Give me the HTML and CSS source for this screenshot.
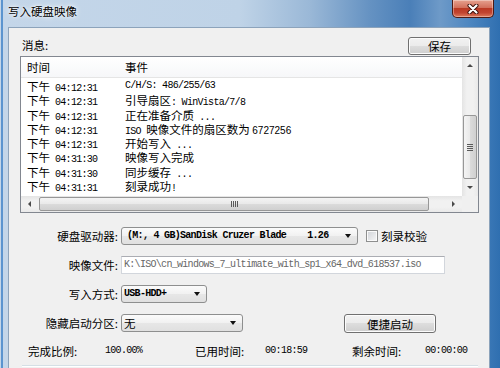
FILE: index.html
```html
<!DOCTYPE html>
<html lang="zh-CN">
<head>
    <meta charset="utf-8">
    <title>写入硬盘映像</title>
    <link rel="stylesheet" href="styles.css">
</head>
<body>
<div class="window">
    <div class="titlebar">
        <div class="title">写入硬盘映像</div>
        <div class="close-btn">
            <svg width="12" height="10" viewBox="0 0 12 10">
                <path d="M2.5 1.5 L9.5 8.5 M9.5 1.5 L2.5 8.5" stroke="#3a0d08" stroke-width="4" stroke-linecap="round"/>
                <path d="M2.5 1.5 L9.5 8.5 M9.5 1.5 L2.5 8.5" stroke="#fff" stroke-width="2.2" stroke-linecap="round"/>
            </svg>
        </div>
    </div>

    <div class="client">
        <div class="msg-bar">
            <span class="msg-label">消息:</span>
            <button class="btn save-btn">保存</button>
        </div>

        <div class="listbox">
            <div class="list-view">
                <div class="list-head"><span>时间</span><span>事件</span></div>
                <div class="list-body">
                    <div class="row"><span>下午<span class="mono time-num">04:12:31</span></span><span class="mono">C/H/S: 486/255/63</span></div>
                    <div class="row"><span>下午<span class="mono time-num">04:12:31</span></span><span>引导扇区<span class="mono">: WinVista/7/8</span></span></div>
                    <div class="row"><span>下午<span class="mono time-num">04:12:31</span></span><span>正在准备介质<span class="mono"> ...</span></span></div>
                    <div class="row"><span>下午<span class="mono time-num">04:12:31</span></span><span><span class="mono">ISO </span>映像文件的扇区数为 <span class="num">6727256</span></span></div>
                    <div class="row"><span>下午<span class="mono time-num">04:12:31</span></span><span>开始写入<span class="mono"> ...</span></span></div>
                    <div class="row"><span>下午<span class="mono time-num">04:31:30</span></span><span>映像写入完成</span></div>
                    <div class="row"><span>下午<span class="mono time-num">04:31:30</span></span><span>同步缓存<span class="mono"> ...</span></span></div>
                    <div class="row"><span>下午<span class="mono time-num">04:31:31</span></span><span>刻录成功<span class="mono">!</span></span></div>
                </div>
            </div>
            <div class="vscroll">
                <div class="sb-btn"><span class="arr up"></span></div>
                <div class="track"></div>
                <div class="vthumb"><span class="grip-v"></span></div>
                <div class="sb-btn"><span class="arr down"></span></div>
            </div>
            <div class="hscroll">
                <div class="sb-btn"><span class="arr left"></span></div>
                <div class="hthumb"><span class="grip-h"></span></div>
                <div class="track"></div>
                <div class="sb-btn"><span class="arr right"></span></div>
            </div>
            <div class="corner"></div>
        </div>

        <div class="form">
            <div class="form-label">硬盘驱动器:</div>
            <div class="field">
                <div class="combo drive-combo"><span class="mono bold drive-text">(M:, 4 GB)SanDisk Cruzer Blade    1.26</span><span class="arr down"></span></div>
                <div class="check"><span class="check-box"></span>刻录校验</div>
            </div>

            <div class="form-label">映像文件:</div>
            <div class="field">
                <div class="path-input mono">K:\ISO\cn_windows_7_ultimate_with_sp1_x64_dvd_618537.iso</div>
            </div>

            <div class="form-label">写入方式:</div>
            <div class="field">
                <div class="combo mode-combo"><span class="mono bold">USB-HDD+</span><span class="arr down"></span></div>
            </div>

            <div class="form-label">隐藏启动分区:</div>
            <div class="field">
                <div class="combo hide-combo"><span>无</span><span class="arr down"></span></div>
                <button class="btn quick-btn">便捷启动</button>
            </div>
        </div>

        <div class="status">
            <span>完成比例:</span>
            <span class="mono">100.00%</span>
            <span>已用时间:</span>
            <span class="mono">00:18:59</span>
            <span>剩余时间:</span>
            <span class="mono">00:00:00</span>
        </div>
        <div class="group-line"></div>
    </div>
</div>
</body>
</html>
```

FILE: styles.css
```css
html, body {
    margin: 0;
    height: 100%;
    overflow: hidden;
}
body {
    font-family: "Noto Sans CJK SC", sans-serif;
    font-size: 11.5px;
    color: #000;
}
.window {
    width: 500px;
    height: 368px;
    overflow: hidden;
    background:
        linear-gradient(90deg, transparent 1px, #5b94cf 1px, #5b94cf 3px, transparent 3px),
        linear-gradient(90deg, #c4d6e9 0%, #bfd3e7 48%, #9ab8d7 62%, #6592c2 74%, #4a7fb8 82%, #6e9ac8 88%, #4d86c0 94%, #2f6fb0 100%);
}

/* title bar */
.titlebar {
    display: flex;
    align-items: flex-start;
    height: 27px;
}
.title {
    padding: 4px 0 0 8px;
    line-height: 14px;
    text-shadow: 0 0 6px #fff, 0 0 3px #fff;
}
.close-btn {
    margin-left: auto;
    margin-right: 6px;
    width: 42px;
    height: 18px;
    box-sizing: border-box;
    border: 1px solid #4d1a14;
    border-top: none;
    border-radius: 0 0 5px 5px;
    background: linear-gradient(#e6a28f, #d2705c 45%, #bb3a24 50%, #c14430 75%, #dd7a5c);
    box-shadow: inset 0 0 0 1px rgba(255, 255, 255, 0.35);
    display: flex;
    align-items: center;
    justify-content: center;
}

/* client area */
.client {
    margin: 0 10px 0 8px;
    height: 341px;
    box-sizing: border-box;
    border: 1px solid #8ca3bb;
    border-bottom: none;
    background: #f0f0f0;
    padding: 9px 10px 0 11px;
}
.msg-bar {
    display: flex;
    justify-content: space-between;
    align-items: flex-start;
    height: 19px;
}
.msg-label {
    margin-left: 2px;
    line-height: 16px;
}
.btn {
    font: inherit;
    color: #000;
    padding: 0;
    box-sizing: border-box;
    border: 1px solid #707070;
    border-radius: 3px;
    background: linear-gradient(#f2f2f2, #ebebeb 50%, #dddddd 50%, #cfcfcf);
    box-shadow: inset 0 0 0 1px #fcfcfc;
    line-height: 16px;
}
.save-btn {
    width: 63px;
    height: 18px;
    margin-right: 8px;
}

/* list */
.listbox {
    height: 157px;
    box-sizing: border-box;
    border: 1px solid #828790;
    background: #fff;
    display: grid;
    grid-template-columns: 1fr 16px;
    grid-template-rows: 1fr 16px;
}
.list-view {
    overflow: hidden;
}
.list-head {
    height: 20px;
    border-bottom: 1px solid #e5e5e5;
    background: linear-gradient(#fff, #f6f7f9);
}
.list-head, .row {
    display: grid;
    grid-template-columns: 98px 1fr;
    padding-left: 6px;
}
.list-head span {
    line-height: 20px;
}
.list-body {
    padding-top: 1px;
}
.row {
    height: 14.3px;
    line-height: 14.3px;
    white-space: nowrap;
}
.mono {
    font-family: "Liberation Mono", "Courier New", monospace;
    font-size: 10px;
    letter-spacing: -0.7px;
}
.bold {
    font-weight: bold;
}
.time-num {
    margin-left: 5px;
}
.num {
    font-family: "Liberation Sans", Arial, sans-serif;
    font-size: 10px;
}

/* scrollbars */
.vscroll {
    display: flex;
    flex-direction: column;
    background: linear-gradient(90deg, #e4e4e4, #f1f1f1 30%, #f1f1f1 70%, #e9e9e9);
}
.hscroll {
    display: flex;
    background: linear-gradient(#e4e4e4, #f1f1f1 30%, #f1f1f1 70%, #e9e9e9);
}
.corner {
    background: #f0f0f0;
}
.sb-btn {
    flex: 0 0 17px;
    display: flex;
    align-items: center;
    justify-content: center;
}
.track {
    flex: 1;
}
.vthumb, .hthumb {
    box-sizing: border-box;
    border: 1px solid #979797;
    border-radius: 2px;
    display: flex;
    align-items: center;
    justify-content: center;
}
.vthumb {
    flex: 0 0 64px;
    margin: 0 1px;
    background: linear-gradient(90deg, #f4f4f4, #e9e9e9 50%, #dbdbdb 50%, #d0d0d0);
}
.hthumb {
    flex: 0 0 390px;
    margin: 1px 0 1px 1px;
    background: linear-gradient(#f4f4f4, #e9e9e9 50%, #dbdbdb 50%, #d0d0d0);
}
.grip-v {
    width: 6px;
    height: 7px;
    background: repeating-linear-gradient(#5a5a5a 0 1px, transparent 1px 2px);
}
.grip-h {
    width: 7px;
    height: 6px;
    background: repeating-linear-gradient(90deg, #5a5a5a 0 1px, transparent 1px 2px);
}
.arr {
    width: 0;
    height: 0;
    border: 3px solid transparent;
}
.arr.up {
    border-top-width: 0;
    border-bottom: 3px solid #4a4a4a;
}
.arr.down {
    border-bottom-width: 0;
    border-top: 3px solid #4a4a4a;
}
.arr.left {
    border-left-width: 0;
    border-right: 3px solid #4a4a4a;
}
.arr.right {
    border-right-width: 0;
    border-left: 3px solid #4a4a4a;
}

/* form */
.form {
    margin-top: 14px;
    display: grid;
    grid-template-columns: 98px 1fr;
    column-gap: 3px;
    row-gap: 11px;
    grid-auto-rows: 18px;
}
.form-label {
    text-align: right;
    line-height: 18px;
}
.field {
    display: flex;
    align-items: flex-start;
}
.combo {
    height: 18px;
    box-sizing: border-box;
    border: 1px solid #8e8f8f;
    border-radius: 3px;
    background: linear-gradient(#fbfbfb, #f1f1f1 50%, #e7e7e7 50%, #e0e0e0);
    display: flex;
    align-items: center;
    justify-content: space-between;
    padding: 0 6px 0 2px;
    line-height: 16px;
    white-space: pre;
}
.combo .arr.down {
    border-width: 4px 3.5px 0;
    border-top-color: #111;
}
.drive-combo {
    width: 237px;
}
.drive-text {
    margin-left: 3px;
}
.mode-combo {
    width: 86px;
}
.hide-combo {
    width: 122px;
}
.check {
    display: flex;
    align-items: center;
    height: 18px;
    margin-left: 8px;
}
.check-box {
    width: 12px;
    height: 12px;
    box-sizing: border-box;
    border: 1px solid #8e8f8f;
    background: linear-gradient(135deg, #cfd2d7, #f7f7f7);
    box-shadow: inset 0 0 0 1px #fafafa;
    margin-right: 3px;
}
.path-input {
    width: 324px;
    height: 18px;
    box-sizing: border-box;
    border: 1px solid #d2d6dc;
    border-top-color: #abadb3;
    background: #fff;
    color: #666;
    padding-left: 2px;
    line-height: 16px;
    white-space: nowrap;
    overflow: hidden;
}
.quick-btn {
    width: 92px;
    height: 19px;
    margin-left: 101px;
}

/* status */
.status {
    margin-top: 12px;
    display: grid;
    grid-template-columns: 77px 90px 70px 87px 73px auto;
    padding-left: 8px;
    line-height: 14px;
}
.group-line {
    margin: 7px 1px 0 2px;
    border-top: 1px solid #d5dfe5;
    border-bottom: 1px solid #fff;
}
```
